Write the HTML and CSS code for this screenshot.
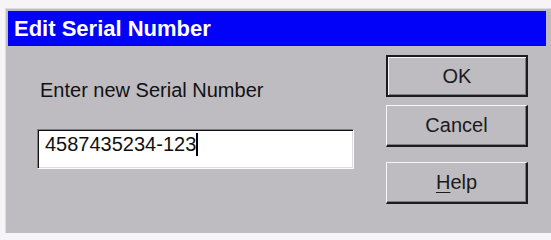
FILE: index.html
```html
<!DOCTYPE html>
<html>
<head>
<meta charset="utf-8">
<title>Edit Serial Number</title>
<link rel="stylesheet" href="styles.css">
</head>
<body>
<div class="dialog">
  <div class="titlebar">Edit Serial Number</div>
  <div class="content">
    <div class="left">
      <div class="label">Enter new Serial Number</div>
      <div class="field"><span class="value">4587435234-123</span><span class="caret"></span></div>
    </div>
    <div class="buttons">
      <div class="btn default">OK</div>
      <div class="btn cancel">Cancel</div>
      <div class="btn help"><u>H</u>elp</div>
    </div>
  </div>
</div>
</body>
</html>
```

FILE: styles.css
```css
html, body {
  margin: 0;
  padding: 0;
}
body {
  background: #f6f4f6;
  font-family: "Liberation Sans", Arial, sans-serif;
  width: 551px;
  height: 240px;
  overflow: hidden;
}
.dialog {
  margin: 8px 0 0 5px;
  width: 546px;
  height: 225px;
  box-sizing: border-box;
  border-top: 1px solid #dedce0;
  border-left: 1px solid #dedce0;
  padding: 2px 5px 0 2px;
  background: #bebcc1;
}
.titlebar {
  height: 35px;
  background: #0202f8;
  color: #fff;
  font-weight: bold;
  font-size: 22px;
  display: flex;
  align-items: center;
  padding-left: 6px;
}
.content {
  display: flex;
  padding: 9px 0 0 29px;
}
.left {
  width: 317px;
}
.label {
  font-size: 20px;
  line-height: 23px;
  color: #111;
  margin-top: 24px;
  padding-left: 3px;
}
.field {
  margin-top: 27px;
  height: 40px;
  box-sizing: border-box;
  background: #fff;
  border-top: 1px solid #7e7d80;
  border-left: 1px solid #7e7d80;
  border-right: 1px solid #fbfbfc;
  border-bottom: 1px solid #fbfbfc;
  box-shadow: inset 1px 1px 0 #111, inset -1px -1px 0 #dddbe0;
  padding: 3px 0 0 7px;
  font-size: 20px;
  line-height: 23px;
  color: #111;
  display: flex;
  align-items: flex-start;
}
.caret {
  display: inline-block;
  width: 2px;
  height: 23px;
  background: #000;
}
.buttons {
  margin-left: 32px;
  display: flex;
  flex-direction: column;
}
.btn {
  width: 142px;
  height: 42px;
  box-sizing: border-box;
  display: flex;
  align-items: center;
  justify-content: center;
  font-size: 20px;
  color: #1a1a1a;
  background: #bebcc1;
  border-top: 1px solid #f6f6f8;
  border-left: 1px solid #f6f6f8;
  border-right: 2px solid #1c1c1e;
  border-bottom: 2px solid #1c1c1e;
  box-shadow: inset -1px -1px 0 #7e7d80;
}
.btn.default {
  border: 2px solid #1c1c1e;
  box-shadow: inset 1px 1px 0 #f6f6f8, inset -1px -1px 0 #7e7d80;
}
.btn.cancel {
  margin-top: 8px;
}
.btn.help {
  margin-top: 15px;
}
.btn u {
  text-decoration-thickness: 1px;
  text-underline-offset: 3px;
}
```
